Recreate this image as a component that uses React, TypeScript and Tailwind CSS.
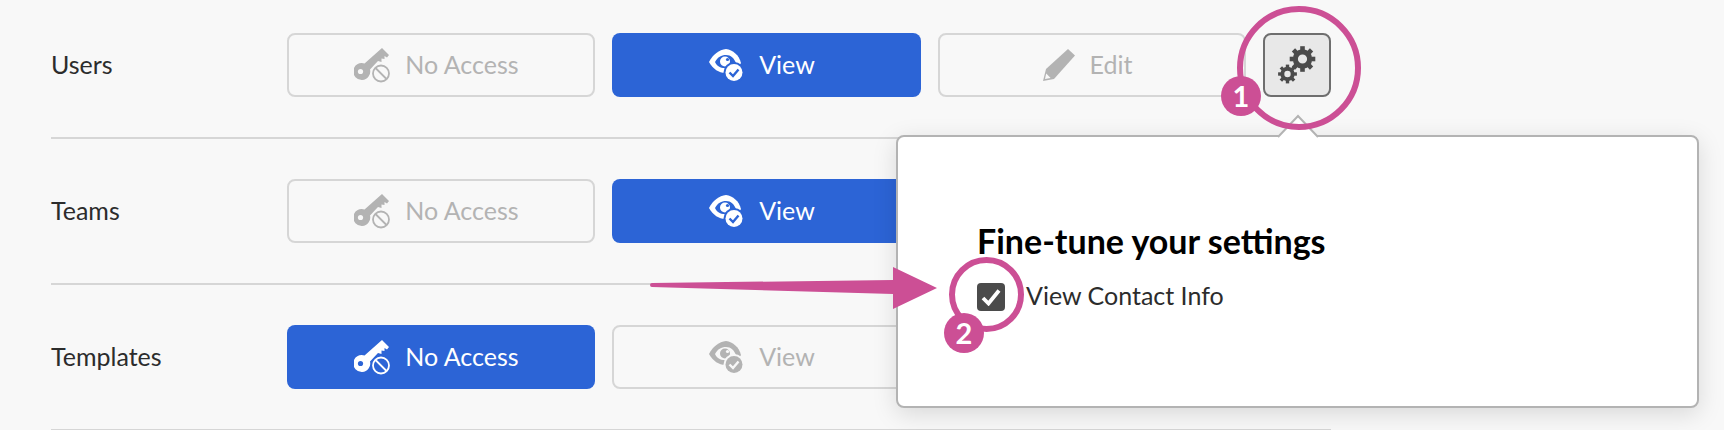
const GRAY = '#b3b3b3';
const BG = '#f8f8f8';
const BLUE = '#2c64d6';

function KeyIcon({ color, bg }: { color: string; bg: string }) {
  return (
    <svg width="36" height="35" viewBox="0 0 36 35" className="shrink-0">
      <path d="M28 0 L35 7 L33 9.5 L30.5 8 L30.5 11 L27.5 10.5 L27.5 14 L24 13 L16 21.5 A8.5 8.5 0 1 1 10.5 15.5 Z" fill={color} />
      <circle cx="6.5" cy="23.5" r="2.6" fill={bg} />
      <circle cx="27" cy="25.5" r="10" fill={bg} />
      <circle cx="27" cy="25.5" r="8" fill="none" stroke={color} strokeWidth="1.8" />
      <path d="M21.5 20 L32.5 31" stroke={color} strokeWidth="1.8" />
    </svg>
  );
}

function EyeIcon({ color, bg }: { color: string; bg: string }) {
  return (
    <svg width="35" height="33" viewBox="0 0 35 33" className="shrink-0">
      <path d="M0 13 C4 5 10 1 17 0 C24 1 30 6 32 14 C28 21 22 24 16 24 C10 24 4 20 0 13 Z" fill={color} />
      <path d="M6 13 C9 8 12 6 17 6 C22 6 25 9 27 14 C24 18 20 20 16 19 C11 19 8 17 6 13 Z" fill={bg} />
      <circle cx="16" cy="12.5" r="5" fill={color} />
      <circle cx="18.5" cy="10.5" r="1.6" fill={bg} />
      <circle cx="25" cy="23.5" r="10.5" fill={bg} />
      <circle cx="25" cy="23.5" r="8.5" fill={color} />
      <path d="M20.5 23.5 L24 27 L29.5 20.5" fill="none" stroke={bg} strokeWidth="2.4" />
    </svg>
  );
}

function PencilIcon({ color, bg }: { color: string; bg: string }) {
  return (
    <svg width="32" height="32" viewBox="0 0 32 32" className="shrink-0">
      <path d="M25 0 L32 6.5 L11 30 L0 32 L3 20 Z" fill={color} />
      <path d="M3.2 24.5 L2 30 L7.6 28.9 Z" fill={bg} />
    </svg>
  );
}

function Gear({ cx, cy, r, hole, teeth, tooth }: { cx: number; cy: number; r: number; hole: number; teeth: number; tooth: number }) {
  const body = r * 0.76;
  return (
    <g fill="#4b4b4b">
      {Array.from({ length: teeth }, (_, i) => (
        <rect
          key={i}
          x={cx - tooth / 2}
          y={cy - r}
          width={tooth}
          height={r - body + 1}
          transform={`rotate(${(360 / teeth) * i} ${cx} ${cy})`}
        />
      ))}
      <circle cx={cx} cy={cy} r={(body + hole) / 2} fill="none" stroke="#4b4b4b" strokeWidth={body - hole} />
    </g>
  );
}

function GearsIcon() {
  return (
    <svg width="38" height="38" viewBox="0 0 38 38">
      <Gear cx={24.5} cy={13} r={12.8} hole={4.6} teeth={8} tooth={4.6} />
      <Gear cx={9.5} cy={28} r={9.4} hole={3.2} teeth={8} tooth={3.4} />
    </svg>
  );
}

function AccessButton({ kind, active }: { kind: 'none' | 'view' | 'edit'; active?: boolean }) {
  const color = active ? '#ffffff' : GRAY;
  const bg = active ? BLUE : BG;
  return (
    <button
      className={
        active
          ? 'flex h-16 items-center justify-center rounded-lg bg-[#2c64d6] pr-[9px] text-[25px] text-white'
          : 'flex h-16 items-center justify-center rounded-lg border-2 border-[#d6d6d6] pr-[9px] text-[25px] text-[#b3b3b3]'
      }
    >
      {kind === 'none' && <KeyIcon color={color} bg={bg} />}
      {kind === 'view' && <EyeIcon color={color} bg={bg} />}
      {kind === 'edit' && <PencilIcon color={color} bg={bg} />}
      <span className="ml-[15px]">{kind === 'none' ? 'No Access' : kind === 'view' ? 'View' : 'Edit'}</span>
    </button>
  );
}

function Row({ label, active }: { label: string; active: 'none' | 'view' }) {
  const isUsers = label === 'Users';
  return (
    <div className="mb-10 grid grid-cols-[219px_308px_309px_308px_68px] items-center gap-x-[17px] border-b-2 border-[#d6d6d6] pb-10">
      <div className="text-[25px] text-[#2c2c2c]">{label}</div>
      <AccessButton kind="none" active={active === 'none'} />
      <AccessButton kind="view" active={active === 'view'} />
      {/* the popover covers the rest of the lower rows */}
      {isUsers ? <AccessButton kind="edit" /> : <div className="h-16" />}
      {isUsers ? (
        <button className="flex h-16 items-center justify-center rounded-lg border-2 border-[#6e6e6e] bg-[#e8e8e8]">
          <GearsIcon />
        </button>
      ) : (
        <div />
      )}
    </div>
  );
}

export default function App() {
  return (
    <div className="relative h-[430px] w-[1724px] overflow-hidden bg-[#f8f8f8] [font-family:Lato,sans-serif]">
      <div className="ml-[51px] w-[1280px] pt-[33px]">
        <Row label="Users" active="view" />
        <Row label="Teams" active="view" />
        <Row label="Templates" active="none" />
      </div>

      {/* popover */}
      <div className="absolute left-[896px] top-[135px] h-[273px] w-[803px] rounded-lg border-2 border-[#b3b3b3] bg-white pl-[79px] pt-[86px] shadow-[0_6px_24px_rgba(0,0,0,0.13)]">
        <svg width="44" height="26" viewBox="0 0 44 26" className="absolute left-[378px] top-[-23px]">
          <path d="M2 23 L22 2 L42 23 L42 26 L2 26 Z" fill="#ffffff" />
          <path d="M2 23 L22 2 L42 23" fill="none" stroke="#b3b3b3" strokeWidth="2" />
        </svg>
        <h2 className="h-9 text-[34px] font-bold leading-9 text-black">Fine-tune your settings</h2>
        <label className="mt-[22px] flex items-center gap-[21px] text-[25px] leading-7 text-[#2c2c2c]">
          <span className="flex h-7 w-7 items-center justify-center rounded bg-[#4b4b4b]">
            <svg width="20" height="18" viewBox="0 0 20 18">
              <path d="M2 10 L7.5 15.5 L18 2.5" fill="none" stroke="#ffffff" strokeWidth="3.8" />
            </svg>
          </span>
          <span className="pb-1">View Contact Info</span>
        </label>
      </div>

      {/* callouts */}
      <div className="absolute left-[1237px] top-[6px] h-[124px] w-[124px] rounded-full border-[6px] border-[#cc4f95]" />
      <div className="absolute left-[1221px] top-[76px] flex h-10 w-10 items-center justify-center rounded-full bg-[#cc4f95] text-[29px] font-bold text-white">1</div>
      <svg width="300" height="50" viewBox="0 0 300 50" className="absolute left-[645px] top-[263px]">
        <path d="M7 20 L248 17 L248 4 L292 25 L248 46 L248 31 L7 24 A2 2 0 0 1 7 20 Z" fill="#cc4f95" />
      </svg>
      <div className="absolute left-[949px] top-[257px] h-[75px] w-[75px] rounded-full border-[6px] border-[#cc4f95]" />
      <div className="absolute left-[944px] top-[313px] flex h-10 w-10 items-center justify-center rounded-full bg-[#cc4f95] text-[29px] font-bold text-white">2</div>
    </div>
  );
}
